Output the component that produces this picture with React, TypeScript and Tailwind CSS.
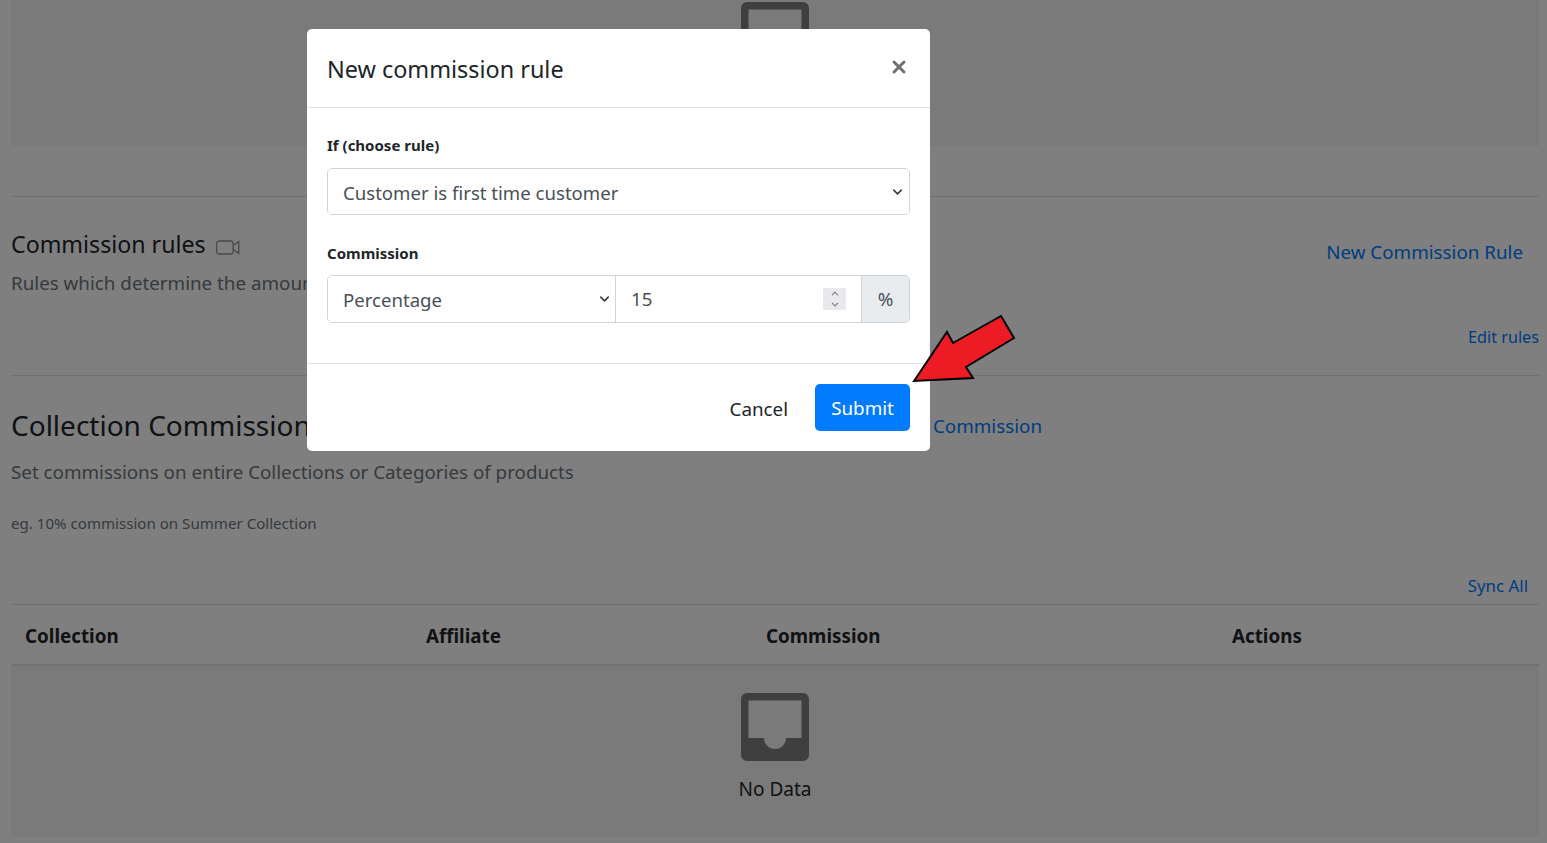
import { ChevronDown, ChevronUp, X } from "lucide-react";

// Inbox glyph shown in the empty tables
function InboxIcon() {
  return (
    <svg width="68" height="68" viewBox="0 0 68 68" className="block">
      <path
        fillRule="evenodd"
        fill="#7e7e7e"
        d="M6 0h56a6 6 0 0 1 6 6v56a6 6 0 0 1-6 6H6a6 6 0 0 1-6-6V6a6 6 0 0 1 6-6zM7.5 7.5v37.5h15.5a11 11 0 0 0 22 0h15.5v-37.5z"
      />
    </svg>
  );
}

function VideoIcon() {
  return (
    <svg width="24" height="15" viewBox="0 0 24 15" fill="none" stroke="#929292" strokeWidth="1.3" className="mt-[6px]">
      <rect x="0.6" y="1" width="16.5" height="13" rx="2.5" />
      <path d="M17.1 5.5L22.8 1.6V13.4L17.1 9.5" />
    </svg>
  );
}

function EmptyCard() {
  return (
    <div className="h-[171px] bg-[#f5f5f5] flex flex-col items-center pt-[27px]">
      <InboxIcon />
      <div className="mt-[13px] text-[19px] leading-[30px] text-[#212529]">No Data</div>
    </div>
  );
}

function SelectBox({ value, className, arrow }: { value: string; className: string; arrow: string }) {
  return (
    <div className={`relative ${className}`}>
      <select className="w-full h-full appearance-none bg-white pl-[15px] pt-[2px] text-[18.6px] text-[#495057] outline-none">
        <option>{value}</option>
      </select>
      <ChevronDown className={`absolute top-1/2 -translate-y-1/2 w-[15px] h-[15px] text-[#343a40] pointer-events-none ${arrow}`} strokeWidth={2.5} />
    </div>
  );
}

export default function App() {
  return (
    <div
      className="relative h-[843px] overflow-hidden bg-white text-[#212529]"
      style={{ fontFamily: '"Noto Sans", "Open Sans", sans-serif' }}
    >
      <div className="pl-[11px] pr-[8px]">
        <div className="-mt-[25px]">
          <EmptyCard />
        </div>

        <div className="mt-[50px] border-t border-[#dee2e6] h-[179px]">
          <div className="flex justify-between pr-[16px] pt-[29px]">
            <div>
              <div className="flex items-center gap-[10px]">
                <h3 className="text-[23.2px] leading-[36px]">Commission rules</h3>
                <VideoIcon />
              </div>
              <p className="mt-[6px] text-[18.8px] leading-[30px] text-[#6c757d]">
                Rules which determine the amount of commission
              </p>
            </div>
            <a className="mt-[11px] text-[18.8px] leading-[30px] text-[#007bff]">New Commission Rule</a>
          </div>
          <div className="mt-[26px] text-right text-[16.2px] leading-[27px] text-[#007bff]">Edit rules</div>
        </div>

        <div className="border-t border-[#dee2e6] h-[229px]">
          <div className="flex justify-between w-[1031px] pt-[27px]">
            <h2 className="text-[28px] leading-[44px]">Collection Commission</h2>
            <a className="mt-[8px] text-[18.8px] leading-[30px] text-[#007bff]">New Collection Commission</a>
          </div>
          <p className="mt-[10px] text-[18.8px] leading-[30px] text-[#6c757d]">
            Set commissions on entire Collections or Categories of products
          </p>
          <p className="mt-[24px] text-[15.1px] leading-[24px] text-[#6c757d]">eg. 10% commission on Summer Collection</p>
          <div className="mt-[37px] pr-[11px] text-right text-[16.9px] leading-[27px] text-[#007bff]">Sync All</div>
        </div>

        <div className="box-content border-t border-b-2 border-[#dee2e6] h-[55px] pt-[4px] flex items-center font-bold text-[18.8px] text-[#212529]">
          <div className="w-[415px] pl-[14px]">Collection</div>
          <div className="w-[340px]">Affiliate</div>
          <div className="w-[466px]">Commission</div>
          <div>Actions</div>
        </div>
        <EmptyCard />
      </div>

      {/* modal backdrop */}
      <div className="absolute inset-0 bg-black/50">
        <div className="ml-[307px] mt-[29px] w-[623px] h-[422px] bg-white rounded-[5px] flex flex-col">
          <div className="h-[79px] shrink-0 border-b border-[#dee2e6] pl-[20px] pr-[21px] flex justify-between items-center">
            <h5 className="text-[23.4px] leading-[36px] mt-[2px] text-[#212529]">New commission rule</h5>
            <X className="w-[20px] h-[20px] text-[#6f6f6f] -mt-[2px]" strokeWidth={3.5} />
          </div>

          <div className="flex-1 px-[20px] pt-[25px] border-b border-[#dee2e6]">
            <label className="block text-[15px] leading-[24px] font-bold text-[#212529]">If (choose rule)</label>
            <SelectBox
              value="Customer is first time customer"
              arrow="right-[4px]"
              className="mt-[11px] h-[47px] border border-[#ced4da] rounded-[5px] overflow-hidden"
            />

            <label className="block mt-[26px] text-[15px] leading-[24px] font-bold text-[#212529]">Commission</label>
            <div className="mt-[10px] flex h-[48px] border border-[#ced4da] rounded-[5px] overflow-hidden">
              <SelectBox value="Percentage" arrow="right-[3px]" className="w-[288px] border-r border-[#ced4da]" />
              <div className="flex-1 flex items-center pl-[15px] pr-[15px] pt-[1px] justify-between text-[18.8px] text-[#495057]">
                <span>15</span>
                <div className="w-[23px] h-[22px] -mt-[1px] bg-[#e9e9ed] flex flex-col items-center justify-center text-[#7b7b85]">
                  <ChevronUp className="w-[14px] h-[11px]" strokeWidth={2.5} />
                  <ChevronDown className="w-[14px] h-[11px]" strokeWidth={2.5} />
                </div>
              </div>
              <div className="w-[48px] pt-[1px] bg-[#e9ecef] border-l border-[#ced4da] flex items-center justify-center text-[18.8px] text-[#495057]">
                %
              </div>
            </div>
          </div>

          <div className="h-[87px] shrink-0 px-[20px] flex items-center justify-end gap-[27px]">
            <button className="pt-[3px] text-[18.8px] text-[#212529]">Cancel</button>
            <button className="w-[95px] h-[47px] pt-[2px] rounded-[5px] bg-[#007bff] text-white text-[18.8px]">Submit</button>
          </div>
        </div>
      </div>

      {/* annotation arrow */}
      <svg className="absolute left-[905px] top-[310px]" width="120" height="80" viewBox="905 310 120 80">
        <path
          d="M914 381L947 332L953 343L1001 316L1014 338L966 367L973 378Z"
          fill="#ed1c24"
          stroke="#000"
          strokeWidth="2"
        />
      </svg>
    </div>
  );
}
